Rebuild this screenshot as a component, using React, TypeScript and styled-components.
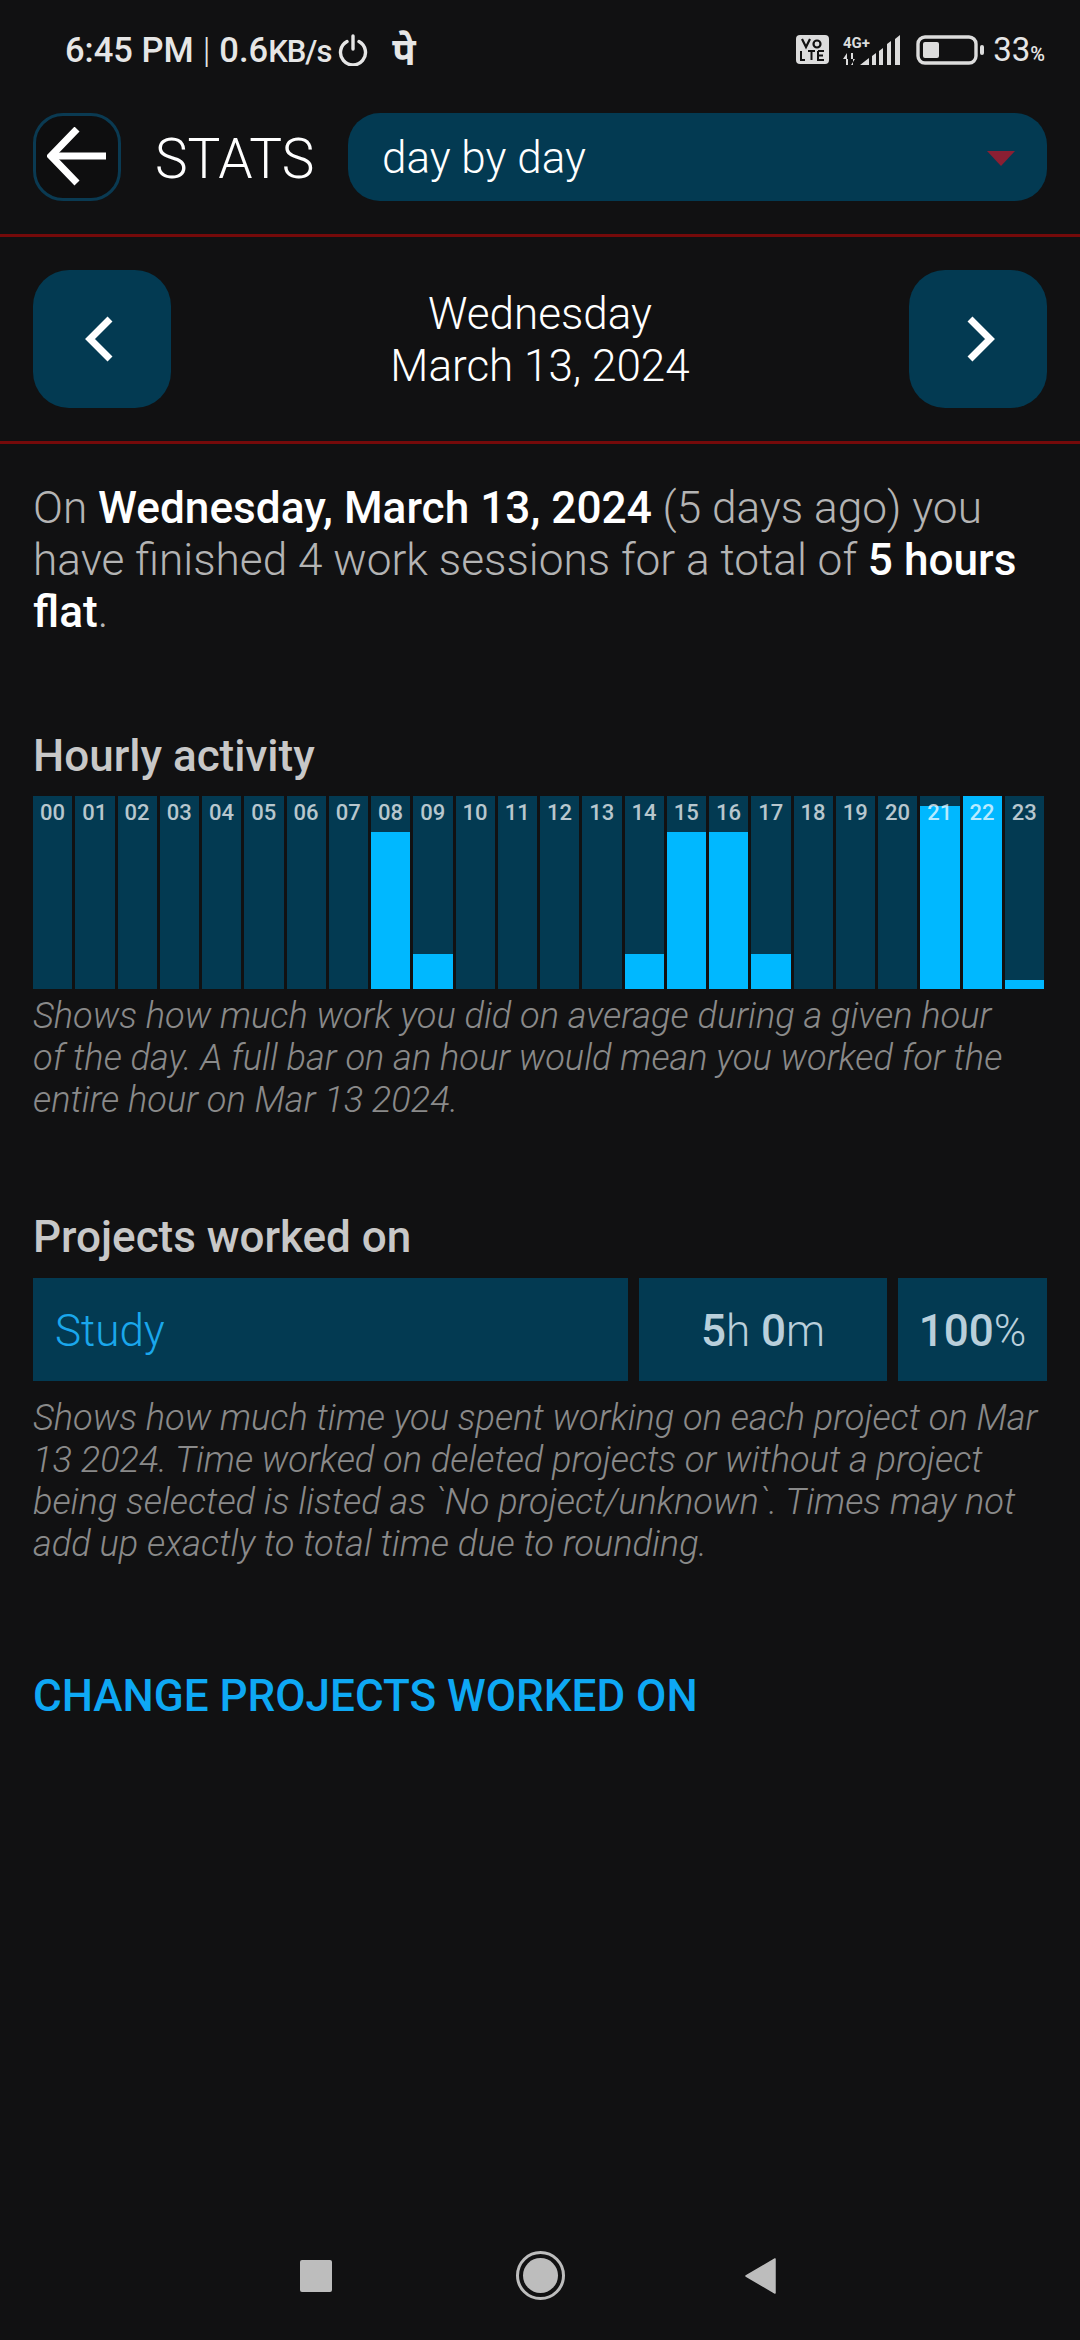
import React from "react";
import styled, { createGlobalStyle } from "styled-components";

const Global = createGlobalStyle`
  html, body { margin: 0; padding: 0; background: #111112; }
  * { box-sizing: border-box; }
`;

const Page = styled.div`
  width: 1080px;
  height: 2340px;
  background: #111112;
  color: #fff;
  font-family: Roboto, "Noto Sans", sans-serif;
  display: flex;
  flex-direction: column;
  overflow: hidden;
`;

const StatusBar = styled.div`
  height: 113px;
  padding: 0 35px 14px 65px;
  display: flex;
  align-items: center;
  justify-content: space-between;
  color: #e6e6e6;
`;
const StatusLeft = styled.div`
  display: flex;
  align-items: center;
  font-size: 34.5px;
  font-weight: 500;
`;
const StatusDevanagari = styled.span`
  margin-left: 24px;
  font-family: "Noto Sans", "Noto Sans Devanagari", sans-serif;
  font-weight: 700;
  font-size: 38px;
`;
const StatusText = styled.span`
  white-space: pre;
  margin-right: 7px;
  & small { font-size: 31px; letter-spacing: -1px; }
`;
const StatusSep = styled.span`
  font-weight: 300;
  margin: 0 9px;
`;
const StatusRight = styled.div`
  display: flex;
  align-items: center;
`;
const StatusGap = styled.span<{ $w: number }>`
  width: ${(p) => p.$w}px;
`;
const BatteryText = styled.span`
  font-size: 33px;
  font-weight: 400;
  & small { font-size: 20px; font-weight: 500; }
`;

const Header = styled.div`
  display: flex;
  align-items: center;
  height: 88px;
  margin: 0 33px;
`;
const BackButton = styled.div`
  width: 88px;
  height: 88px;
  border: 3px solid #0a3a52;
  border-radius: 30px;
  background: #0e0e0f;
  display: flex;
  align-items: center;
  justify-content: center;
`;
const HeaderTitle = styled.div`
  margin-left: 34px;
  width: 193px;
  font-size: 55px;
  font-weight: 300;
  white-space: nowrap;
  padding-top: 3px;
`;
const Select = styled.div`
  flex: 1;
  height: 88px;
  border-radius: 32px;
  background: #033a52;
  padding: 2px 32px 0 34px;
  display: flex;
  align-items: center;
  justify-content: space-between;
  font-size: 44px;
  font-weight: 300;
`;
const Caret = styled.div`
  width: 0;
  height: 0;
  border-left: 14px solid transparent;
  border-right: 14px solid transparent;
  border-top: 15px solid #8a1f33;
`;

const Divider = styled.div<{ $top: number }>`
  height: 3px;
  background: #750a0a;
  margin-top: ${(p) => p.$top}px;
`;

const DateRow = styled.div`
  margin: 33px 33px 0;
  display: flex;
  align-items: center;
  justify-content: space-between;
`;
const NavButton = styled.div<{ $side: "left" | "right" }>`
  width: 138px;
  height: 138px;
  border-radius: 36px;
  background: #033a52;
  display: flex;
  align-items: center;
  justify-content: center;
  ${(p) => (p.$side === "left" ? "padding-right: 6px;" : "padding-left: 6px;")}
`;
const DateText = styled.div`
  text-align: center;
  font-size: 44px;
  line-height: 52px;
  font-weight: 300;
  padding-top: 2px;
`;

const Summary = styled.p`
  margin: 38px 33px 0;
  font-size: 44.2px;
  line-height: 52px;
  font-weight: 300;
  color: #b4b4b4;
  & b { color: #fff; font-weight: 500; }
`;

const SectionTitle = styled.h2<{ $top: number }>`
  margin: ${(p) => p.$top}px 33px 0;
  font-size: 44px;
  line-height: 52px;
  font-weight: 500;
  color: #c8c8c8;
`;

const Chart = styled.div`
  margin: 14px 36px 0 33px;
  height: 193px;
  display: grid;
  grid-template-columns: repeat(24, 1fr);
  gap: 3px;
`;
const Bar = styled.div`
  position: relative;
  background: #033a52;
  display: flex;
  align-items: flex-end;
`;
const BarFill = styled.div`
  width: 100%;
  background: #00b8ff;
`;
const BarLabel = styled.span`
  position: absolute;
  top: 4px;
  left: 0;
  right: 0;
  text-align: center;
  font-size: 22px;
  line-height: 25px;
  font-weight: 500;
  color: rgba(255, 255, 255, 0.72);
`;

const Note = styled.p<{ $top: number }>`
  margin: ${(p) => p.$top}px 33px 0;
  font-size: 36.2px;
  line-height: 42px;
  font-weight: 300;
  font-style: italic;
  color: #8a8a8a;
`;

const ProjectRow = styled.div`
  margin: 15px 33px 0;
  height: 103px;
  display: flex;
  gap: 11px;
`;
const ProjectCell = styled.div<{ $w?: number }>`
  ${(p) => (p.$w ? `width: ${p.$w}px;` : "flex: 1;")}
  background: #033a52;
  display: flex;
  align-items: center;
  padding-top: 3px;
  font-size: 44px;
  font-weight: 300;
  color: #b9cfdb;
  justify-content: center;
  & b { font-weight: 500; }
`;
const ProjectName = styled(ProjectCell)`
  justify-content: flex-start;
  padding-left: 22px;
  color: #1aa7ec;
`;

const ChangeLink = styled.div`
  margin: 105px 33px 0;
  font-size: 44px;
  line-height: 52px;
  font-weight: 500;
  color: #0ea8f4;
`;

const NavBar = styled.div`
  margin-top: auto;
  margin-bottom: 40px;
  height: 49px;
  padding-left: 300px;
  display: flex;
  align-items: center;
  & > svg:nth-child(2) { margin: 0 180px 0 184px; }
`;

const fills: Record<number, number> = { 8: 157, 9: 35, 14: 35, 15: 157, 16: 157, 17: 35, 21: 183, 22: 193, 23: 9 };
const hours = Array.from({ length: 24 }, (_, i) => i);

export default function App() {
  return (
    <Page>
      <Global />
      <StatusBar>
        <StatusLeft>
          <span>6:45 PM</span>
          <StatusSep>|</StatusSep>
          <StatusText>0.6<small>KB/s</small></StatusText>
          <svg width="30" height="32" viewBox="0 0 30 32" fill="none" stroke="#e6e6e6" strokeWidth="3.4" strokeLinecap="round">
            <path d="M9 7.5a12.5 12.5 0 1 0 12 0" />
            <path d="M15 2v13" />
          </svg>
          <StatusDevanagari>पे</StatusDevanagari>
        </StatusLeft>
        <StatusRight>
          <svg width="33" height="29" viewBox="0 0 33 29">
            <rect width="33" height="29" rx="4" fill="#dcdcdc" />
            <path d="M6 4l4 8 4-8" fill="none" stroke="#111" strokeWidth="2.2" />
            <circle cx="21" cy="9" r="3.5" fill="none" stroke="#111" strokeWidth="2.2" />
            <path d="M5 16v9h4M12 16h7M15.5 16v9M22 16h6M22 16v9h6M22 20.5h5" fill="none" stroke="#111" strokeWidth="2" />
          </svg>
          <StatusGap $w={14} />
          <svg width="57" height="30" viewBox="0 0 57 30" fill="#dcdcdc">
            <path d="M3 24h2v6h-2zM0 24l4-6v6zM8 18h2v12h-2zM8 30l4-6h-4z" />
            <path d="M17 30l9-7v7zM29 21l4-3v12h-4zM36 16l4-3v17h-4zM44 9l4-3v24h-4zM52 4l5-4v30h-5z" />
            <text x="0" y="13" fontFamily="Roboto" fontSize="15" fontWeight="700">4G+</text>
          </svg>
          <StatusGap $w={16} />
          <svg width="68" height="30" viewBox="0 0 68 30">
            <rect x="2" y="2" width="58" height="26" rx="7" fill="none" stroke="#dcdcdc" strokeWidth="3.4" />
            <rect x="7" y="7" width="16" height="16" rx="2" fill="#dcdcdc" />
            <rect x="64" y="10" width="4" height="10" rx="2" fill="#dcdcdc" />
          </svg>
          <StatusGap $w={9} />
          <BatteryText>33<small>%</small></BatteryText>
        </StatusRight>
      </StatusBar>

      <Header>
        <BackButton>
          <svg width="60" height="60" viewBox="0 0 60 60" fill="none" stroke="#fff" strokeWidth="7">
            <path d="M30 2L4 29l26 27" />
            <path d="M4 29h55" />
          </svg>
        </BackButton>
        <HeaderTitle>STATS</HeaderTitle>
        <Select>
          day by day
          <Caret />
        </Select>
      </Header>
      <Divider $top={33} />

      <DateRow>
        <NavButton $side="left">
          <svg width="30" height="46" viewBox="0 0 30 46" fill="none" stroke="#fff" strokeWidth="7">
            <path d="M26 3L6 23l20 20" />
          </svg>
        </NavButton>
        <DateText>
          Wednesday
          <br />
          March 13, 2024
        </DateText>
        <NavButton $side="right">
          <svg width="30" height="46" viewBox="0 0 30 46" fill="none" stroke="#fff" strokeWidth="7">
            <path d="M4 3l20 20L4 43" />
          </svg>
        </NavButton>
      </DateRow>
      <Divider $top={33} />

      <Summary>
        On <b>Wednesday, March 13, 2024</b> (5 days ago) you have finished 4 work sessions for a total of <b>5 hours flat</b>.
      </Summary>

      <SectionTitle $top={92}>Hourly activity</SectionTitle>
      <Chart>
        {hours.map((h) => (
          <Bar key={h}>
            <BarFill style={{ height: fills[h] ?? 0 }} />
            <BarLabel>{String(h).padStart(2, "0")}</BarLabel>
          </Bar>
        ))}
      </Chart>
      <Note $top={6}>
        Shows how much work you did on average during a given hour
        <br />
        of the day. A full bar on an hour would mean you worked for the entire hour on Mar 13 2024.
      </Note>

      <SectionTitle $top={90}>Projects worked on</SectionTitle>
      <ProjectRow>
        <ProjectName>Study</ProjectName>
        <ProjectCell $w={248}>
          <span><b>5</b>h <b>0</b>m</span>
        </ProjectCell>
        <ProjectCell $w={149}>
          <span><b>100</b>%</span>
        </ProjectCell>
      </ProjectRow>
      <Note $top={16}>
        Shows how much time you spent working on each project on Mar 13 2024. Time worked on deleted projects or without a project being selected is listed as `No project/unknown`. Times may not add up exactly to total time due to rounding.
      </Note>

      <ChangeLink>CHANGE PROJECTS WORKED ON</ChangeLink>

      <NavBar>
        <svg width="32" height="32" viewBox="0 0 32 32">
          <rect width="32" height="32" rx="2" fill="#bdbdbd" />
        </svg>
        <svg width="49" height="49" viewBox="0 0 49 49">
          <circle cx="24.500" cy="24.500" r="23" fill="none" stroke="#bdbdbd" strokeWidth="3" />
          <circle cx="24.500" cy="24.500" r="17.500" fill="#bdbdbd" />
        </svg>
        <svg width="31" height="36" viewBox="0 0 31 36">
          <path d="M30 1v34L1 18z" fill="#bdbdbd" stroke="#bdbdbd" strokeWidth="1.500" strokeLinejoin="round" />
        </svg>
      </NavBar>
    </Page>
  );
}
